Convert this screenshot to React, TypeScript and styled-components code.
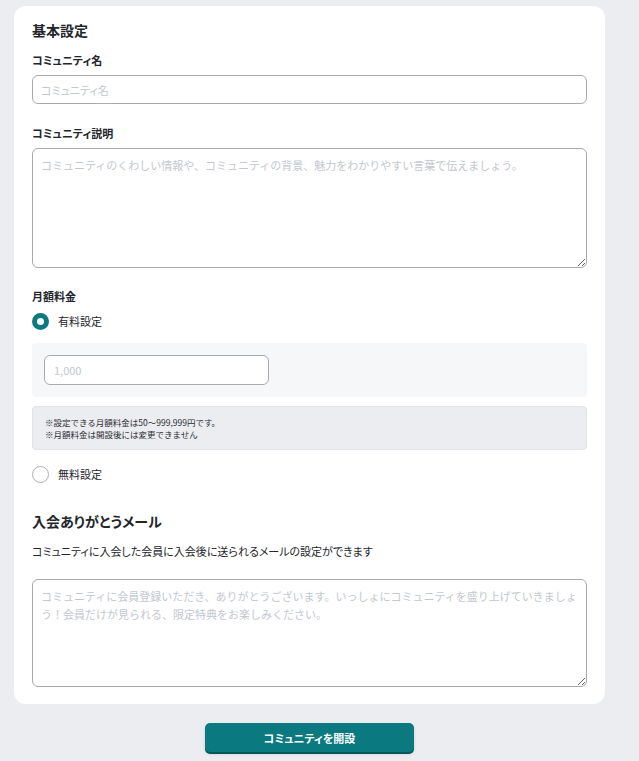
import * as React from 'react';
import styled, { createGlobalStyle } from 'styled-components';

const GlobalStyle = createGlobalStyle`
    html, body {
        margin: 0;
        padding: 0;
        background-color: #ecedf1;
        font-family: 'Noto Sans CJK JP', 'Noto Sans', sans-serif;
        color: #23252b;
    }
    * {
        box-sizing: border-box;
    }
`

// word joiner keeps "う" and "！" on the same line, as in the design
const welcomePlaceholder =
    'コミュニティに会員登録いただき、ありがとうございます。いっしょにコミュニティを盛り上げていきましょう\u2060！会員だけが見られる、限定特典をお楽しみください。';

const App = () => {
    const [plan, setPlan] = React.useState<'paid' | 'free'>('paid');
    return (
        <Page>
            <GlobalStyle />
            <Card>
                <Title>基本設定</Title>
                <Label>コミュニティ名</Label>
                <TextInput placeholder="コミュニティ名" />
                <Label>コミュニティ説明</Label>
                <TextArea
                    $height={120}
                    placeholder="コミュニティのくわしい情報や、コミュニティの背景、魅力をわかりやすい言葉で伝えましょう。"
                />
                <Label>月額料金</Label>
                <RadioRow $gap={2}>
                    <Radio
                        type="radio"
                        name="plan"
                        checked={plan === 'paid'}
                        onChange={() => setPlan('paid')}
                    />
                    有料設定
                </RadioRow>
                <PricePanel>
                    <PriceInput placeholder="1,000" />
                </PricePanel>
                <Notice>
                    <NoticeLine>※設定できる月額料金は50〜999,999円です。</NoticeLine>
                    <NoticeLine>※月額料金は開設後には変更できません</NoticeLine>
                </Notice>
                <RadioRow $gap={16}>
                    <Radio
                        type="radio"
                        name="plan"
                        checked={plan === 'free'}
                        onChange={() => setPlan('free')}
                    />
                    無料設定
                </RadioRow>
                <SectionTitle>入会ありがとうメール</SectionTitle>
                <Description>コミュニティに入会した会員に入会後に送られるメールの設定ができます</Description>
                <TextArea $height={108} placeholder={welcomePlaceholder} />
            </Card>
            <Actions>
                <SubmitButton>コミュニティを開設</SubmitButton>
            </Actions>
        </Page>
    )
}

const Page = styled.div`
    width: 639px;
    padding: 6px 0 10px 14px;
`
const Card = styled.div`
    width: 591px;
    background-color: #ffffff;
    border-radius: 12px;
    padding: 14px 18px 17px;
    display: flex;
    flex-direction: column;
    align-items: stretch;
`
const Title = styled.h2`
    margin: 0;
    font-size: 14px;
    line-height: 20px;
    font-weight: 700;
    font-feature-settings: 'palt';
`
const Label = styled.div`
    margin-top: 20px;
    margin-bottom: 7px;
    font-size: 11px;
    line-height: 16px;
    font-weight: 700;
    font-feature-settings: 'palt';
    &:first-of-type {
        margin-top: 12px;
    }
`
const fieldStyle = `
    font-family: 'Noto Sans CJK JP', 'Noto Sans', sans-serif;
    font-size: 11px;
    color: #23252b;
    border: 1px solid #a9aab0;
    border-radius: 6px;
    background-color: #ffffff;
    outline: none;
    &::placeholder {
        color: #c3c7cf;
    }
`
const TextInput = styled.input`
    ${fieldStyle}
    width: 100%;
    height: 29px;
    padding: 0 8px;
    margin-bottom: 1px;
    font-feature-settings: 'palt';
`
const TextArea = styled.textarea<{ $height: number }>`
    ${fieldStyle}
    display: block;
    width: 100%;
    height: ${p => p.$height}px;
    padding: 7px 8px;
    line-height: 18px;
    resize: vertical;
    margin: 0;
`
const RadioRow = styled.label<{ $gap: number }>`
    margin-top: ${p => p.$gap}px;
    display: flex;
    align-items: center;
    gap: 9px;
    height: 16px;
    font-size: 11px;
    font-feature-settings: 'palt';
    cursor: pointer;
`
const Radio = styled.input`
    appearance: none;
    margin: 0;
    width: 17px;
    height: 17px;
    border-radius: 50%;
    border: 1px solid #aeafb4;
    background-color: #ffffff;
    cursor: pointer;
    &:checked {
        border: 5px solid #0b7a80;
        background-color: #ffffff;
    }
`
const PricePanel = styled.div`
    margin-top: 14px;
    background-color: #f6f7f9;
    border-radius: 4px;
    padding: 12px;
`
const PriceInput = styled.input`
    ${fieldStyle}
    width: 225px;
    height: 30px;
    padding: 0 9px;
    display: block;
`
const Notice = styled.div`
    margin-top: 9px;
    height: 44px;
    background-color: #ecedf0;
    border: 1px solid #e2e3e7;
    border-radius: 4px;
    padding: 0 12px;
    color: #2a2c33;
    display: flex;
    flex-direction: column;
    justify-content: center;
`
const NoticeLine = styled.div`
    font-size: 8.5px;
    line-height: 12px;
    height: 12px;
    overflow: hidden;
`
const SectionTitle = styled.h3`
    margin: 29px 0 0;
    font-size: 14px;
    line-height: 20px;
    font-weight: 700;
    font-feature-settings: 'palt';
`
const Description = styled.p`
    margin: 12px 0 20px;
    font-size: 11px;
    line-height: 16px;
    font-feature-settings: 'palt';
`
const Actions = styled.div`
    width: 591px;
    margin-top: 19px;
    display: flex;
    justify-content: center;
`
const SubmitButton = styled.button`
    width: 209px;
    height: 29px;
    border: none;
    border-radius: 5px;
    background-color: #0b7a80;
    box-shadow: 0 2px 0 #06575b, 0 2px 3px rgba(0, 0, 0, 0.15);
    color: #ffffff;
    font-family: 'Noto Sans CJK JP', 'Noto Sans', sans-serif;
    font-size: 11px;
    font-weight: 700;
    font-feature-settings: 'palt';
    cursor: pointer;
`

export default App;
